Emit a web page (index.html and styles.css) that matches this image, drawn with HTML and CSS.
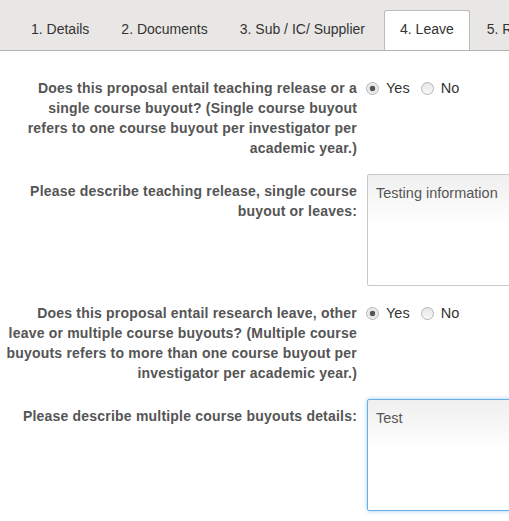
FILE: index.html
```html
<!DOCTYPE html>
<html lang="en">
<head>
    <meta charset="UTF-8">
    <title>Proposal - Leave</title>
    <link rel="stylesheet" href="styles.css">
</head>
<body>

<ul class="tabs">
    <li class="tab">1. Details</li>
    <li class="tab">2. Documents</li>
    <li class="tab">3. Sub / IC/ Supplier</li>
    <li class="tab active">4. Leave</li>
    <li class="tab">5. Review</li>
</ul>

<form class="leave-form">
    <div class="row">
        <label class="control-label">Does this proposal entail teaching release or a single course buyout? (Single course buyout refers to one course buyout per investigator per academic year.)</label>
        <div class="controls radios">
            <label class="radio"><input type="radio" name="release" checked> Yes</label>
            <label class="radio"><input type="radio" name="release"> No</label>
        </div>
    </div>
    <div class="row short">
        <label class="control-label">Please describe teaching release, single course buyout or leaves:</label>
        <div class="controls">
            <textarea class="text-box">Testing information</textarea>
        </div>
    </div>
    <div class="row">
        <label class="control-label">Does this proposal entail research leave, other leave or multiple course buyouts? (Multiple course buyouts refers to more than one course buyout per investigator per academic year.)</label>
        <div class="controls radios">
            <label class="radio"><input type="radio" name="leave" checked> Yes</label>
            <label class="radio"><input type="radio" name="leave"> No</label>
        </div>
    </div>
    <div class="row">
        <label class="control-label">Please describe multiple course buyouts details:</label>
        <div class="controls">
            <textarea class="text-box focused">Test</textarea>
        </div>
    </div>
</form>

</body>
</html>
```

FILE: styles.css
```css
body {
    margin: 0;
    font-family: "Liberation Sans", Arial, sans-serif;
    background: #fff;
    overflow: hidden;
}
.tabs {
    display: flex;
    list-style: none;
    margin: 0;
    padding: 10px 0 0 16px;
    height: 40px;
    background: #e9e7e5;
    border-bottom: 1px solid #b4b2b0;
    white-space: nowrap;
    overflow: hidden;
}
.tab {
    padding: 11px 15px 0 15px;
    margin-right: 2px;
    font-size: 14px;
    color: #333;
    flex-shrink: 0;
}
.tab.active {
    background: #fff;
    border: 1px solid #bdbbb9;
    border-bottom: none;
    border-radius: 3px 3px 0 0;
    padding: 10px 15px 0 15px;
    height: 31px;
    margin-left: 2px;
}
.leave-form {
    padding: 20px 0 0 5px;
}
.row {
    display: flex;
    margin-bottom: 16px;
}
.row.short {
    margin-bottom: 10px;
}
.control-label {
    width: 352px;
    flex-shrink: 0;
    padding-top: 7px;
    text-align: right;
    font-size: 14px;
    font-weight: bold;
    letter-spacing: 0.2px;
    line-height: 20px;
    color: #555;
}
.controls {
    margin-left: 10px;
}
.radios {
    display: flex;
    padding-top: 7px;
    line-height: 20px;
}
.radio {
    display: flex;
    align-items: center;
    height: 20px;
    font-size: 14.5px;
    color: #333;
    margin-right: 12px;
}
.radio input {
    appearance: none;
    margin: 0 7px 0 -1px;
    width: 13px;
    height: 13px;
    border: 1px solid #b5b5b5;
    border-radius: 50%;
    background: linear-gradient(#e6e6e6, #f8f8f8);
    box-sizing: border-box;
}
.radio input:checked {
    background: radial-gradient(circle, #555 0, #555 2.5px, #e0e0e0 3px, #f4f4f4 6px);
}
.text-box {
    display: block;
    width: 260px;
    height: 112px;
    box-sizing: border-box;
    padding: 10px 8px;
    font-family: "Liberation Sans", Arial, sans-serif;
    font-size: 14.5px;
    color: #555;
    border: 1px solid #c9c9c9;
    border-radius: 2px;
    background: linear-gradient(#efefef, #fff 45%);
    resize: none;
    outline: none;
}
.text-box.focused {
    border-color: #66afe9;
    box-shadow: 0 0 4px rgba(102, 175, 233, 0.6);
}
```
